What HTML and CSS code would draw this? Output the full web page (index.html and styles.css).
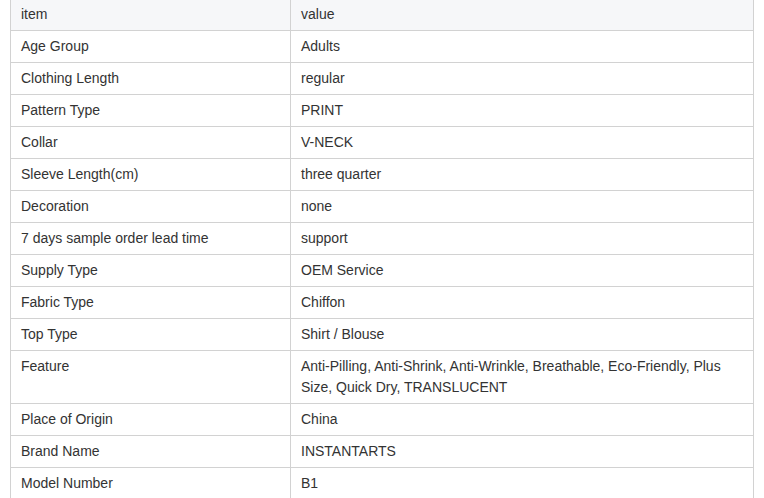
FILE: index.html
```html
<!DOCTYPE html>
<html>
<head>
<meta charset="utf-8">
<link rel="stylesheet" href="styles.css">
</head>
<body>
<div class="wrap">
<table class="spec">
<colgroup><col class="c1"><col class="c2"></colgroup>
<thead>
<tr><th>item</th><th>value</th></tr>
</thead>
<tbody>
<tr><td>Age Group</td><td>Adults</td></tr>
<tr><td>Clothing Length</td><td>regular</td></tr>
<tr><td>Pattern Type</td><td>PRINT</td></tr>
<tr><td>Collar</td><td>V-NECK</td></tr>
<tr><td>Sleeve Length(cm)</td><td>three quarter</td></tr>
<tr><td>Decoration</td><td>none</td></tr>
<tr><td>7 days sample order lead time</td><td>support</td></tr>
<tr><td>Supply Type</td><td>OEM Service</td></tr>
<tr><td>Fabric Type</td><td>Chiffon</td></tr>
<tr><td>Top Type</td><td>Shirt / Blouse</td></tr>
<tr><td>Feature</td><td>Anti-Pilling, Anti-Shrink, Anti-Wrinkle, Breathable, Eco-Friendly, Plus Size, Quick Dry, TRANSLUCENT</td></tr>
<tr><td>Place of Origin</td><td>China</td></tr>
<tr><td>Brand Name</td><td>INSTANTARTS</td></tr>
<tr><td>Model Number</td><td>B1</td></tr>
</tbody>
</table>
</div>
</body>
</html>
```
FILE: styles.css
```css
html, body {
  margin: 0;
  padding: 0;
  background: #fff;
  overflow: hidden;
}
.wrap {
  padding: 0 10px 0 10px;
  margin-top: -2px;
}
.spec {
  border-collapse: collapse;
  width: 743px;
  table-layout: fixed;
  font-family: "Liberation Sans", Arial, sans-serif;
  font-size: 14px;
  line-height: 21px;
  color: #333;
}
.c1 { width: 280px; }
.c2 { width: 463px; }
.spec th,
.spec td {
  border: 1px solid #d2d2d2;
  padding: 5px 10px;
  text-align: left;
  vertical-align: top;
  font-weight: normal;
}
.spec th {
  background: #f6f7f9;
}
```
